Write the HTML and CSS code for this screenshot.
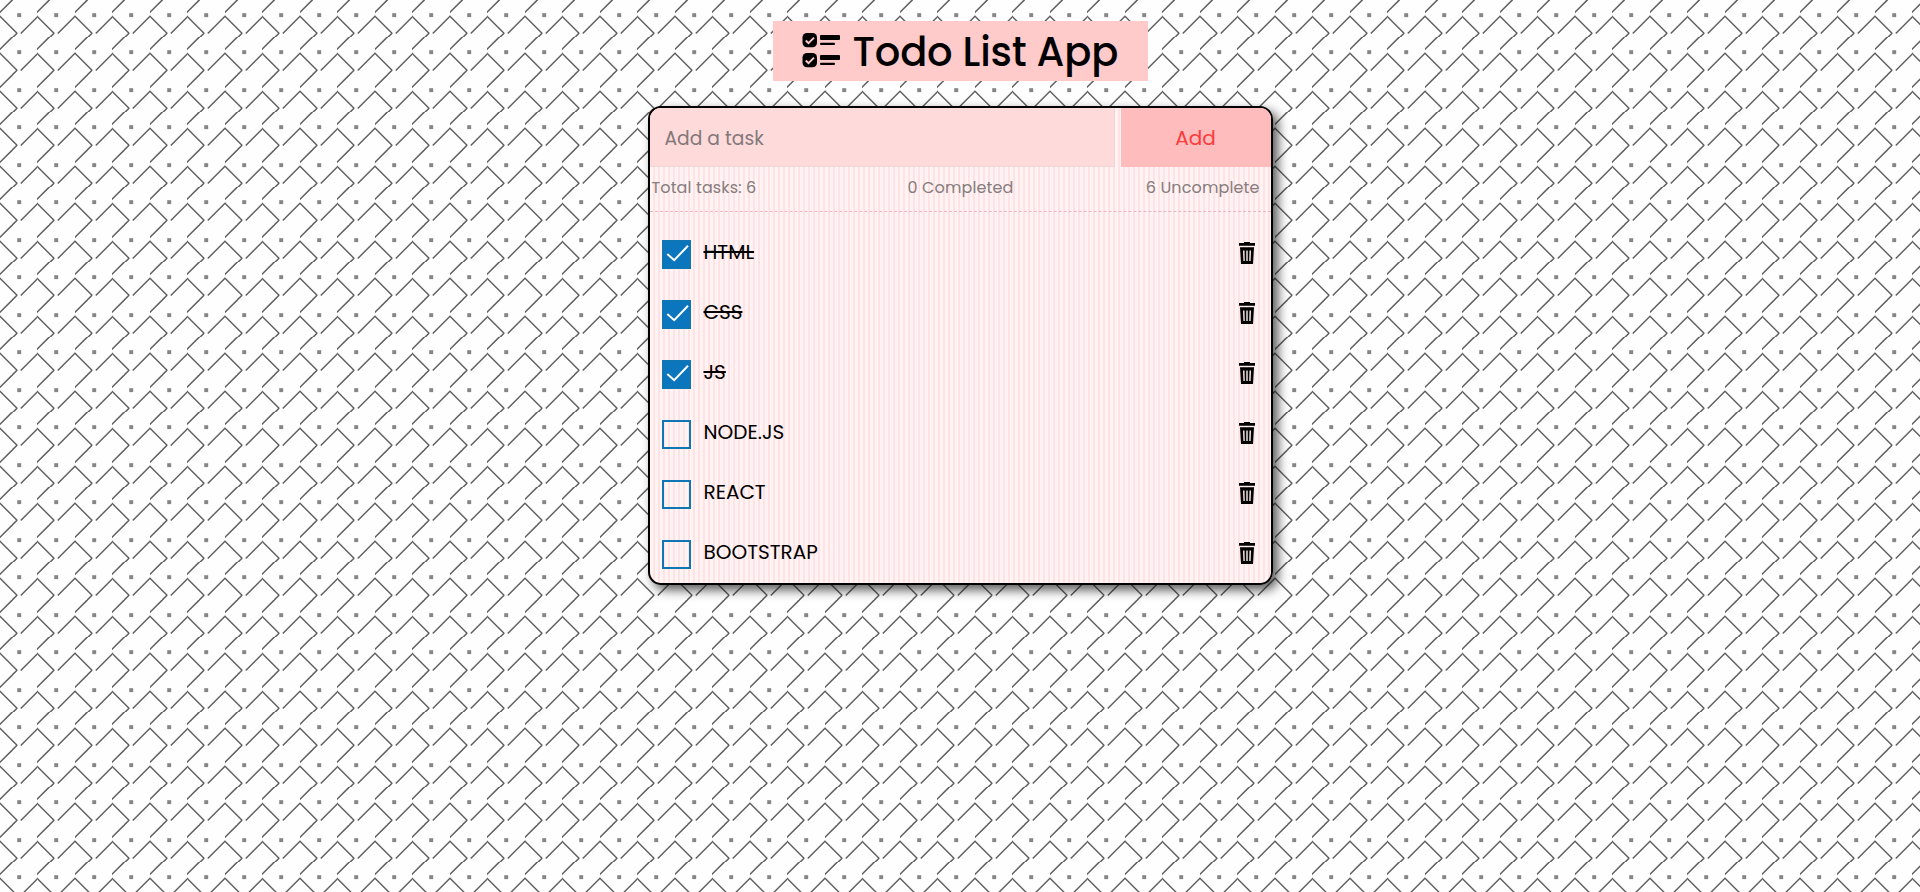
FILE: index.html
```html
<!DOCTYPE html>
<html lang="en">
<head>
<meta charset="utf-8">
<title>Todo List App</title>
<link rel="stylesheet" href="styles.css">
</head>
<body>
<svg class="defs" width="0" height="0" aria-hidden="true">
<symbol id="trash" viewBox="0 0 24 24"><path fill="currentColor" fill-rule="evenodd" d="M4 1h5V0h6v1h5v2.800H4zM5 5.200h14L18 22H6zm3 3.300.4 10.500h1.400L9.500 8.500zm3.300 0V19h1.400V8.500zm3.200 0L14.200 19h1.400L16 8.500z"/></symbol>
<symbol id="check" viewBox="0 0 29 29"><path fill="none" stroke="#fff" stroke-width="2" d="M5.300 14 12.200 20.200 26 5.700"/></symbol>
</svg>
<main class="page">
<h1 class="title">
<svg class="title-icon" viewBox="0 0 39 36" aria-hidden="true"><rect x="0.500" y="0" width="14.500" height="14.300" rx="4.500"/><rect x="0.500" y="20" width="14.500" height="14.300" rx="4.500"/><path d="M3.800 7.500 6.500 10.200l5.500-5.500M3.800 27.500 6.500 30.200l5.500-5.500" fill="none" stroke="#ffcaca" stroke-width="1.900"/><rect x="18" y="2" width="20" height="5" rx="1"/><rect x="18" y="22" width="20" height="5" rx="1"/><rect x="18" y="9.700" width="15" height="2.200" rx="1"/><rect x="18" y="29.700" width="15" height="2.200" rx="1"/></svg>
<span class="title-text">Todo List App</span>
</h1>
<section class="card">
<form class="add-form"><input class="add-input" type="text" placeholder="Add a task"><button class="add-button" type="button">Add</button></form>
<div class="stats"><span>Total tasks: 6</span><span>0 Completed</span><span>6 Uncomplete</span></div>
<ul class="tasks">
<li class="task done"><span class="box"><svg><use href="#check"/></svg></span><span class="name">HTML</span><svg class="trash"><use href="#trash"/></svg></li>
<li class="task done"><span class="box"><svg><use href="#check"/></svg></span><span class="name">CSS</span><svg class="trash"><use href="#trash"/></svg></li>
<li class="task done"><span class="box"><svg><use href="#check"/></svg></span><span class="name">JS</span><svg class="trash"><use href="#trash"/></svg></li>
<li class="task"><span class="box"></span><span class="name">NODE.JS</span><svg class="trash"><use href="#trash"/></svg></li>
<li class="task"><span class="box"></span><span class="name">REACT</span><svg class="trash"><use href="#trash"/></svg></li>
<li class="task"><span class="box"></span><span class="name">BOOTSTRAP</span><svg class="trash"><use href="#trash"/></svg></li>
</ul>
</section>
</main>
</body>
</html>
```
FILE: styles.css
```css
* { box-sizing: border-box; }
html { height: 100%; overflow: hidden; }
body {
  margin: 0;
  min-height: 100%;
  font-family: Poppins, Inter, "Open Sans", sans-serif;
  background: #fefefe url("data:image/svg+xml,%3Csvg xmlns='http://www.w3.org/2000/svg' width='37.5' height='37.5' viewBox='0 0 37.5 37.5'%3E%3Cpath d='M-1 15 16.800 32.800 12 37.600M-1 13.100 12.500-.4M20.500 33 38 15.500' fill='none' stroke='%23606060' stroke-width='1.500' stroke-linejoin='bevel'/%3E%3Cpath d='M17 13h3.900v3.900H17z' fill='%23858585'/%3E%3C/svg%3E") 0 0 / 37.5px 37.5px;
}
.defs { display: block; }
.page { display: flex; flex-direction: column; align-items: center; padding-top: 21px; }
.title {
  display: flex; align-items: center; width: 375px; height: 60px;
  margin: 0 0 25px; padding-left: 29px; gap: 12px;
  background: #ffcaca; font-size: 40px; font-weight: 500; white-space: nowrap;
}
.title-icon { width: 39px; height: 36px; flex: none; }
.title-text { letter-spacing: -.2px; padding-top: 1px; }
.card {
  width: 625px; height: 479px; overflow: hidden;
  border: 2px solid #000; border-radius: 13px;
  background: repeating-linear-gradient(90deg, #fff3f3 0 2.500px, #ffe3e4 3px 4.500px, #fff3f3 5px);
  box-shadow: 5px 5px 11px rgba(0, 0, 0, .65);
}
.add-form { display: flex; height: 59px; gap: 6px; }
.add-input {
  width: 465px; padding: 3px 15px 0; font: 400 18.7px Poppins, Inter, sans-serif;
  border: 1px solid #eed5d6; border-width: 0 1px 1px 0; background: #ffdada;
}
.add-input::placeholder { color: #82787a; opacity: 1; }
.add-button {
  flex: 1; border: 0; background: #ffbcbc; color: #fa3c40;
  font: 400 20px Poppins, Inter, sans-serif;
}
.stats {
  display: grid; grid-template-columns: 256px 1fr auto; align-items: center;
  height: 45px; padding: 0 11px 4px 2px; border-bottom: 1px dashed #efb4c1;
  color: #857d7e; font-size: 16px; letter-spacing: .12px;
}
.tasks { margin: 0; padding: 12px 12px 0; list-style: none; }
.task { display: flex; align-items: center; height: 60px; font-size: 20px; }
.box { width: 29px; height: 29px; margin-top: 1px; border: 2px solid #0f76b5; }
.box svg { display: block; width: 29px; height: 29px; margin: -2px; }
.done .box { background: #0b76bd; }
.name { margin-left: 13px; margin-top: -4px; flex: none; }
.done .name { text-decoration: line-through; text-decoration-thickness: 2px; }
.trash { width: 24px; height: 24px; margin-left: auto; }
```
